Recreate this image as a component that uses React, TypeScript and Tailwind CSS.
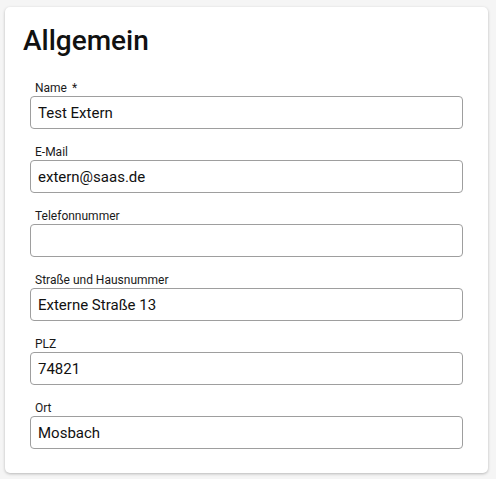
const fields = [
  { label: "Name", required: true, value: "Test Extern" },
  { label: "E-Mail", value: "extern@saas.de" },
  { label: "Telefonnummer", value: "" },
  { label: "Straße und Hausnummer", value: "Externe Straße 13" },
  { label: "PLZ", value: "74821" },
  { label: "Ort", value: "Mosbach" },
];

const App = () => {
  return (
    <div className="min-h-[479px] bg-[#f5f5f5] pt-[7px] pl-[5px] font-['Roboto',sans-serif]">
      <div className="w-[483px] bg-white rounded-[5px] shadow-[0_1px_3px_rgba(0,0,0,0.25)] pt-[18px] pb-[24px]">
        <h1 className="pl-[18px] text-[28px] leading-[32px] font-medium text-[#111]">Allgemein</h1>
        <div className="mt-[24px] flex flex-col gap-[16px] pl-[25px] pr-[25px]">
          {fields.map((f) => (
            <div key={f.label} className="flex flex-col">
              <label className="pl-[5px] h-[15px] text-[12px] leading-[15px] text-[#1a1a1a]">
                {f.label}
                {f.required && <span className="ml-[5px]">*</span>}
              </label>
              <input
                readOnly
                value={f.value}
                className="h-[33px] w-full rounded-[4px] border border-[#9e9e9e] px-[7px] text-[15px] text-[#111] outline-none"
              />
            </div>
          ))}
        </div>
      </div>
    </div>
  );
};

export default App;
